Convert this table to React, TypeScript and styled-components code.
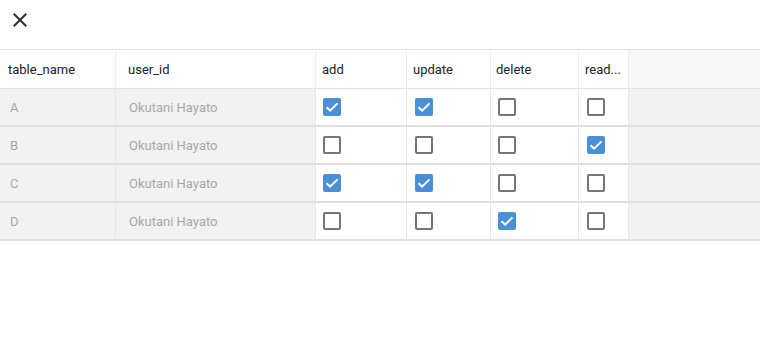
import { Fragment } from "react"
import styled, { createGlobalStyle } from "styled-components"

const GlobalStyle = createGlobalStyle`
  body {
    margin: 0;
    background: #fff;
    font-family: Roboto, "Liberation Sans", sans-serif;
  }
`

const Page = styled.div`
  width: 760px;
  height: 354px;
  background: #fff;
`

const TopBar = styled.div`
  height: 49px;
  padding: 8px 0 0 8px;
  box-sizing: border-box;
`

const CloseButton = styled.button`
  width: 24px;
  height: 24px;
  padding: 0;
  border: none;
  background: none;
  color: #263238;
  cursor: pointer;
  display: flex;
`

const Table = styled.div`
  display: grid;
  grid-template-columns: 116px 200px 91px 84px 88px 50px 1fr;
`

const HeadCell = styled.div<{ $pad: number; $filler?: boolean }>`
  height: 40px;
  box-sizing: border-box;
  border-top: 1px solid #e3e3e3;
  border-bottom: 1px solid #e3e3e3;
  border-right: ${p => (p.$filler ? "none" : "1px solid #ececec")};
  background: ${p => (p.$filler ? "#f7f7f7" : "#fff")};
  padding-left: ${p => p.$pad}px;
  display: flex;
  align-items: center;
  font-size: 13px;
  color: #222;
  white-space: nowrap;
  overflow: hidden;
`

const Cell = styled.div<{ $pad: number; $gray?: boolean; $filler?: boolean }>`
  height: 38px;
  box-sizing: border-box;
  border-bottom: 2px solid #e0e0e0;
  border-right: ${p => (p.$filler ? "none" : "1px solid #e6e6e6")};
  background: ${p => (p.$gray ? "#f2f2f2" : "#fff")};
  padding-left: ${p => p.$pad}px;
  display: flex;
  align-items: center;
  font-size: 13px;
  color: #a8a8a8;
`

const Box = styled.span<{ $on: boolean }>`
  width: 18px;
  height: 18px;
  box-sizing: border-box;
  border-radius: 2px;
  border: ${p => (p.$on ? "none" : "2px solid #757575")};
  background: ${p => (p.$on ? "#4a90d9" : "#fff")};
  display: flex;
  align-items: center;
  justify-content: center;
`

const Check = ({ on }: { on: boolean }) => (
  <Box $on={on}>
    {on && (
      <svg width="18" height="18" viewBox="0 0 18 18">
        <path d="M3.5 9.2l3.6 3.4L14.5 5.4" fill="none" stroke="#fff" strokeWidth="2" />
      </svg>
    )}
  </Box>
)

const rows = [
  { name: "A", perms: [true, true, false, false] },
  { name: "B", perms: [false, false, false, true] },
  { name: "C", perms: [true, true, false, false] },
  { name: "D", perms: [false, false, true, false] },
]

const headPads = [8, 12, 6, 6, 5, 6]
const checkPads = [7, 8, 7, 8]

export default function App() {
  return (
    <Page>
      <GlobalStyle />
      <TopBar>
        <CloseButton>
          <svg width="24" height="24" viewBox="0 0 24 24">
            <path
              fill="currentColor"
              d="M19 6.41L17.59 5 12 10.59 6.41 5 5 6.41 10.59 12 5 17.59 6.41 19 12 13.41 17.59 19 19 17.59 13.41 12z"
            />
          </svg>
        </CloseButton>
      </TopBar>
      <Table>
        {["table_name", "user_id", "add", "update", "delete", "read..."].map((h, i) => (
          <HeadCell key={h} $pad={headPads[i]}>{h}</HeadCell>
        ))}
        <HeadCell $pad={0} $filler />
        {rows.map(r => (
          <Fragment key={r.name}>
            <Cell $pad={10} $gray>{r.name}</Cell>
            <Cell $pad={13} $gray>Okutani Hayato</Cell>
            {r.perms.map((on, i) => (
              <Cell key={i} $pad={checkPads[i]}>
                <Check on={on} />
              </Cell>
            ))}
            <Cell $pad={0} $gray $filler />
          </Fragment>
        ))}
      </Table>
    </Page>
  )
}
